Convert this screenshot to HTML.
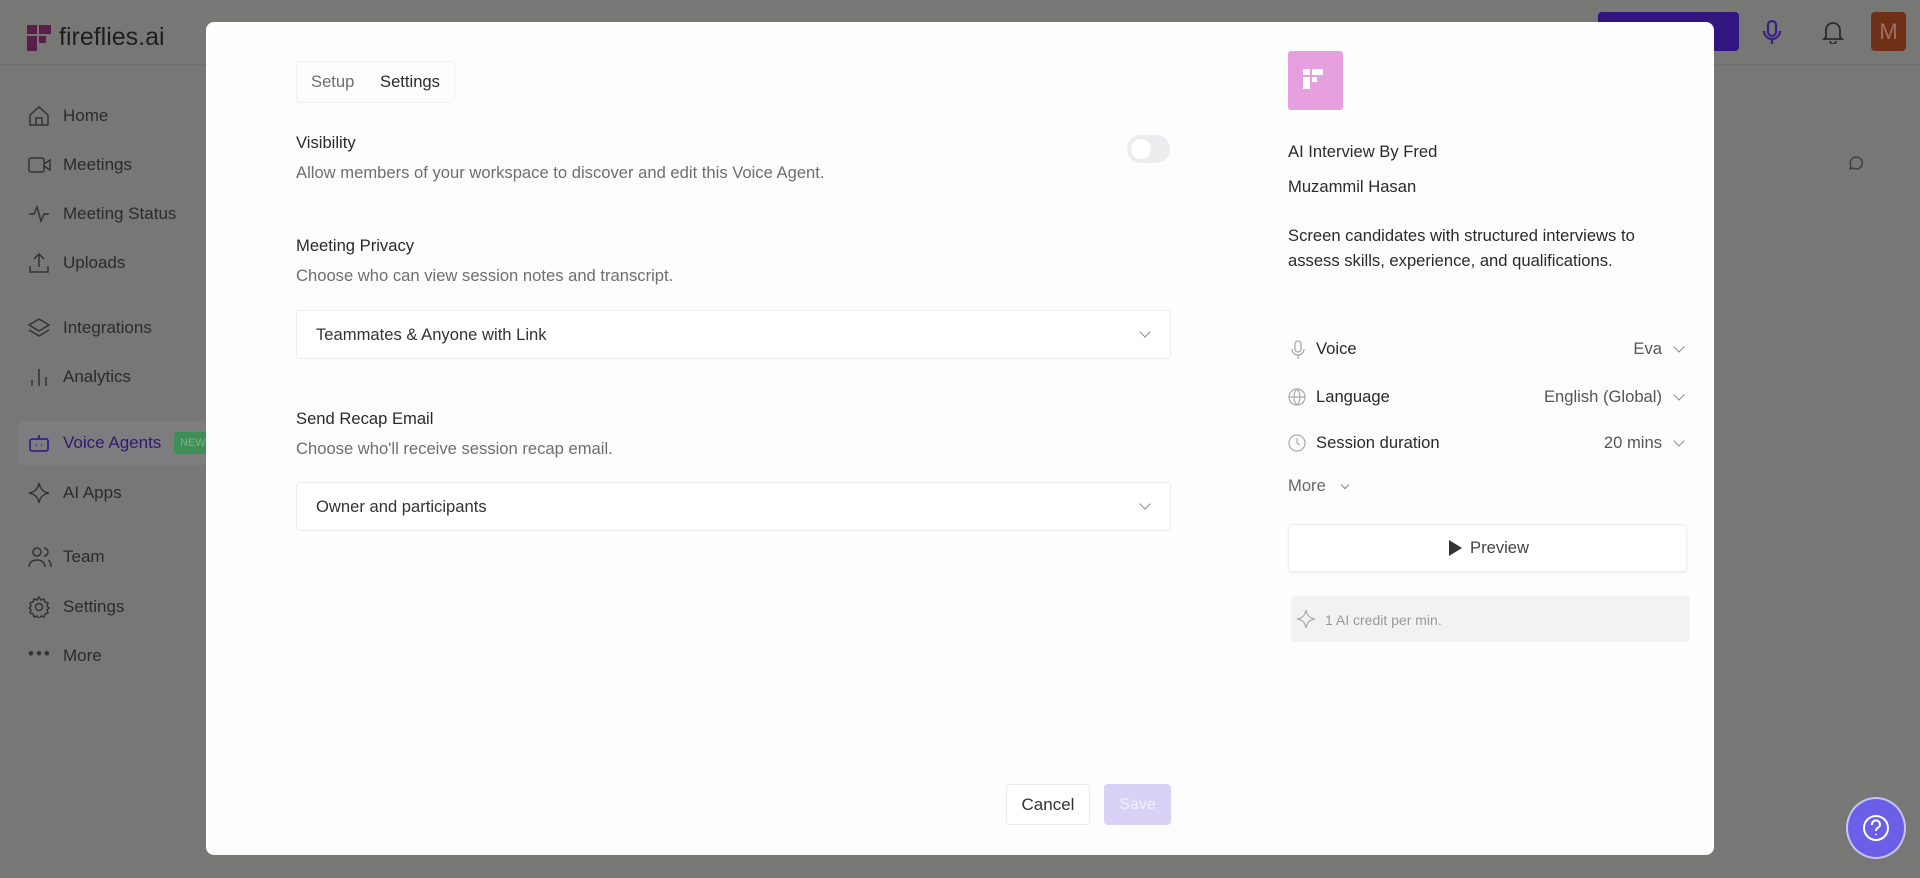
<!DOCTYPE html>
<html><head><meta charset="utf-8"><style>
*{box-sizing:border-box;margin:0;padding:0}
body{width:1920px;height:878px;overflow:hidden;background:#777776;font-family:"Liberation Sans",sans-serif;position:relative}
.a{position:absolute}
.nav{position:absolute;left:63px;font-size:17px;color:#2b2b2b;transform:translateY(-50%)}
.ic{position:absolute;left:28px;transform:translateY(-50%)}
.modal{position:absolute;left:206px;top:22px;width:1508px;height:833px;background:#fdfdfd;border-radius:8px}
.t{position:absolute;font-size:16.6px;color:#2a2a2a;transform:translateY(-50%);white-space:nowrap}
.d{color:#6e6e6e}
.sel{position:absolute;left:90px;width:875px;height:49px;border:1px solid #ececec;border-radius:4px;background:#fff}
.sel span{position:absolute;left:19px;top:50%;transform:translateY(-50%);font-size:16.6px;color:#333}
.chev{position:absolute;width:8px;height:8px;border-right:1.5px solid #888;border-bottom:1.5px solid #888;transform:rotate(45deg)}
</style></head><body>
<div class="a" style="left:0;top:64px;width:1920px;height:1px;background:#6f6f6f"></div>
<svg class="a" style="left:27px;top:25px" width="24" height="26" viewBox="0 0 24 26"><rect x="0" y="0" width="10" height="9" fill="#5a1e4a"/><rect x="12" y="0" width="12" height="9" fill="#5a1e4a"/><rect x="0" y="11" width="10" height="15" fill="#5a1e4a"/><rect x="12" y="11" width="7" height="7" fill="#5a1e4a"/></svg>
<div class="a" style="left:59px;top:23px;font-size:25px;color:#1e1e1e">fireflies.ai</div>
<div class="a" style="left:1598px;top:12px;width:141px;height:39px;background:#311680;border-radius:4px"></div>
<svg class="a" style="left:1762px;top:20px" width="20" height="26" viewBox="0 0 20 26" fill="none" stroke="#3a1f8a" stroke-width="2.2"><rect x="6" y="1" width="8" height="15" rx="4"/><path d="M2 11a8 8 0 0016 0M10 19v5"/></svg>
<svg class="a" style="left:1822px;top:20px" width="22" height="24" viewBox="0 0 22 24" fill="none" stroke="#2b2b2b" stroke-width="1.8"><path d="M4 17V10a7 7 0 0114 0v7l2 2H2z M8 21a3 3 0 006 0"/></svg>
<div class="a" style="left:1871px;top:12px;width:35px;height:39px;background:#6e3016;border-radius:4px;color:#a07060;font-size:22px;text-align:center;line-height:39px">M</div>
<svg class="a" style="left:1848px;top:155px" width="16" height="16" viewBox="0 0 16 16" fill="none" stroke="#3a3a3a" stroke-width="1.3"><path d="M8 2a6 6 0 11-3 11l-3 1 1-3A6 6 0 018 2z"/></svg>
<svg class="ic" style="top:116px" width="22" height="22" viewBox="0 0 22 22" fill="none" stroke="#333" stroke-width="1.5"><path d="M2 10l9-8 9 8v10H2z M8 20v-7h6v7"/></svg><div class="nav" style="top:116px">Home</div>
<svg class="ic" style="top:165px" width="24" height="18" viewBox="0 0 24 18" fill="none" stroke="#333" stroke-width="1.5"><rect x="1" y="2" width="15" height="14" rx="2"/><path d="M16 8l6-4v10l-6-4"/></svg><div class="nav" style="top:165px">Meetings</div>
<svg class="ic" style="top:214px" width="22" height="18" viewBox="0 0 22 18" fill="none" stroke="#333" stroke-width="1.5"><path d="M1 9h5l3-7 4 14 3-7h5"/></svg><div class="nav" style="top:214px">Meeting Status</div>
<svg class="ic" style="top:263px" width="22" height="22" viewBox="0 0 22 22" fill="none" stroke="#333" stroke-width="1.5"><path d="M11 15V2M6 7l5-5 5 5M2 14v6h18v-6"/></svg><div class="nav" style="top:263px">Uploads</div>
<svg class="ic" style="top:328px" width="22" height="20" viewBox="0 0 22 20" fill="none" stroke="#333" stroke-width="1.5"><path d="M11 1l10 6-10 6L1 7z M1 12l10 6 10-6"/></svg><div class="nav" style="top:328px">Integrations</div>
<svg class="ic" style="top:377px" width="22" height="20" viewBox="0 0 22 20" fill="none" stroke="#333" stroke-width="1.5"><path d="M4 19v-6M11 19V2M18 19v-9"/></svg><div class="nav" style="top:377px">Analytics</div>
<div class="a" style="left:18px;top:421px;width:190px;height:44px;background:#7d7d80;border-radius:6px"></div>
<svg class="ic" style="top:443px" width="22" height="20" viewBox="0 0 22 20" fill="none" stroke="#3a1f8a" stroke-width="1.8"><rect x="2" y="6" width="18" height="12" rx="2"/><path d="M11 2v4M8 12h1M13 12h1"/></svg><div class="nav" style="top:443px;color:#33196f">Voice Agents</div>
<div class="a" style="left:174px;top:432px;width:32px;height:22px;background:#3f8e55;border-radius:3px 0 0 3px;font-size:11px;color:#7fb08a;line-height:22px;padding-left:6px">NEW</div>
<svg class="ic" style="top:493px" width="22" height="22" viewBox="0 0 22 22" fill="none" stroke="#333" stroke-width="1.5"><path d="M11 1c1 6 4 9 10 10-6 1-9 4-10 10-1-6-4-9-10-10 6-1 9-4 10-10z"/></svg><div class="nav" style="top:493px">AI Apps</div>
<svg class="ic" style="top:557px" width="24" height="22" viewBox="0 0 24 22" fill="none" stroke="#333" stroke-width="1.5"><circle cx="9" cy="6" r="4"/><path d="M1 21c0-5 4-7 8-7s8 2 8 7M16 2a4 4 0 010 8M20 14c2 1 3 3 3 7"/></svg><div class="nav" style="top:557px">Team</div>
<svg class="ic" style="top:607px" width="22" height="22" viewBox="0 0 22 22" fill="none" stroke="#333" stroke-width="1.5"><circle cx="11" cy="11" r="3.5"/><path d="M11 1l2 3 3-1 1 3 3 1-1 3 2 2-2 2 1 3-3 1-1 3-3-1-2 3-2-3-3 1-1-3-3-1 1-3-2-2 2-2-1-3 3-1 1-3 3 1z"/></svg><div class="nav" style="top:607px">Settings</div>
<div class="ic" style="top:654px;font-size:17px;color:#333;letter-spacing:2px">•••</div><div class="nav" style="top:656px">More</div>
<div class="a" style="left:1846px;top:797px;width:60px;height:62px;border-radius:50%;background:#6a5fe6;border:2px solid #c8c4f5"></div>
<svg class="a" style="left:1862px;top:814px" width="28" height="28" viewBox="0 0 28 28" fill="none" stroke="#fff" stroke-width="2"><circle cx="14" cy="14" r="12"/><path d="M10 11a4 4 0 117 2c-2 1-3 2-3 4M14 20v1"/></svg>
<div class="modal">
 <div class="a" style="left:90px;top:39px;width:159px;height:42px;border:1px solid #f0f0f0;border-radius:4px"></div>
 <div class="t d" style="left:105px;top:60px">Setup</div>
 <div class="t" style="left:174px;top:60px">Settings</div>
 <div class="t" style="left:90px;top:121px">Visibility</div>
 <div class="t d" style="left:90px;top:151px">Allow members of your workspace to discover and edit this Voice Agent.</div>
 <div class="a" style="left:921px;top:113px;width:43px;height:28px;border-radius:14px;background:#ececee"></div>
 <div class="a" style="left:925px;top:117px;width:20px;height:20px;border-radius:50%;background:#fff"></div>
 <div class="t" style="left:90px;top:224px">Meeting Privacy</div>
 <div class="t d" style="left:90px;top:254px">Choose who can view session notes and transcript.</div>
 <div class="sel" style="top:288px"><span>Teammates &amp; Anyone with Link</span><i class="chev" style="left:844px;top:17px"></i></div>
 <div class="t" style="left:90px;top:397px">Send Recap Email</div>
 <div class="t d" style="left:90px;top:427px">Choose who'll receive session recap email.</div>
 <div class="sel" style="top:460px"><span>Owner and participants</span><i class="chev" style="left:844px;top:17px"></i></div>
 <div class="a" style="left:800px;top:762px;width:84px;height:41px;border:1px solid #eaeaea;border-radius:4px;background:#fff;font-size:17px;color:#333;text-align:center;line-height:39px">Cancel</div>
 <div class="a" style="left:898px;top:762px;width:67px;height:41px;border-radius:4px;background:#d9d1f6;font-size:16px;color:#f3f0fd;text-align:center;line-height:41px">Save</div>
 <div class="a" style="left:1082px;top:29px;width:55px;height:59px;background:#e6a0e0;border-radius:3px"></div>
 <svg class="a" style="left:1097px;top:47px" width="22" height="22" viewBox="0 0 22 22" fill="#fff"><rect x="0" y="0" width="7" height="6"/><rect x="9" y="0" width="11" height="6"/><rect x="0" y="8" width="7" height="12"/><rect x="9" y="8" width="5" height="5"/></svg>
 <div class="t" style="left:1082px;top:130px">AI Interview By Fred</div>
 <div class="t" style="left:1082px;top:165px">Muzammil Hasan</div>
 <div class="t" style="left:1082px;top:214px">Screen candidates with structured interviews to</div>
 <div class="t" style="left:1082px;top:239px">assess skills, experience, and qualifications.</div>
 <svg class="a" style="left:1084px;top:318px" width="16" height="20" viewBox="0 0 16 20" fill="none" stroke="#aaa" stroke-width="1.3"><rect x="5" y="1" width="6" height="11" rx="3"/><path d="M2 9a6 6 0 0012 0M8 15v4"/></svg>
 <div class="t" style="left:1110px;top:327px">Voice</div>
 <div class="t" style="left:1172px;top:327px;width:284px;text-align:right;color:#555">Eva</div>
 <i class="chev" style="left:1469px;top:321px"></i>
 <svg class="a" style="left:1082px;top:366px" width="18" height="18" viewBox="0 0 18 18" fill="none" stroke="#aaa" stroke-width="1.2"><circle cx="9" cy="9" r="8"/><path d="M1 9h16M9 1c-4 4-4 12 0 16M9 1c4 4 4 12 0 16"/></svg>
 <div class="t" style="left:1110px;top:375px">Language</div>
 <div class="t" style="left:1172px;top:375px;width:284px;text-align:right;color:#555">English (Global)</div>
 <i class="chev" style="left:1469px;top:369px"></i>
 <svg class="a" style="left:1082px;top:412px" width="18" height="18" viewBox="0 0 18 18" fill="none" stroke="#aaa" stroke-width="1.2"><circle cx="9" cy="9" r="8"/><path d="M9 4v5l3 2"/></svg>
 <div class="t" style="left:1110px;top:421px">Session duration</div>
 <div class="t" style="left:1172px;top:421px;width:284px;text-align:right;color:#555">20 mins</div>
 <i class="chev" style="left:1469px;top:415px"></i>
 <div class="t d" style="left:1082px;top:464px;color:#666">More</div>
 <i class="chev" style="left:1136px;top:460px;width:6px;height:6px"></i>
 <div class="a" style="left:1082px;top:502px;width:399px;height:48px;border:1px solid #eee;border-radius:4px;background:#fff;box-shadow:0 1px 2px rgba(0,0,0,.06)"></div>
 <svg class="a" style="left:1243px;top:518px" width="13" height="16" viewBox="0 0 13 16"><path d="M0 0l13 8-13 8z" fill="#333"/></svg>
 <div class="t" style="left:1264px;top:526px;color:#444">Preview</div>
 <div class="a" style="left:1085px;top:574px;width:399px;height:46px;background:#f2f2f4;border-radius:4px"></div>
 <svg class="a" style="left:1090px;top:587px" width="20" height="20" viewBox="0 0 20 20" fill="none" stroke="#aaa" stroke-width="1.2"><path d="M10 1c1 5 3 8 9 9-6 1-8 4-9 9-1-5-3-8-9-9 6-1 8-4 9-9z"/></svg>
 <div class="t" style="left:1119px;top:598px;font-size:14px;color:#999">1 AI credit per min.</div>
</div>
</body></html>
